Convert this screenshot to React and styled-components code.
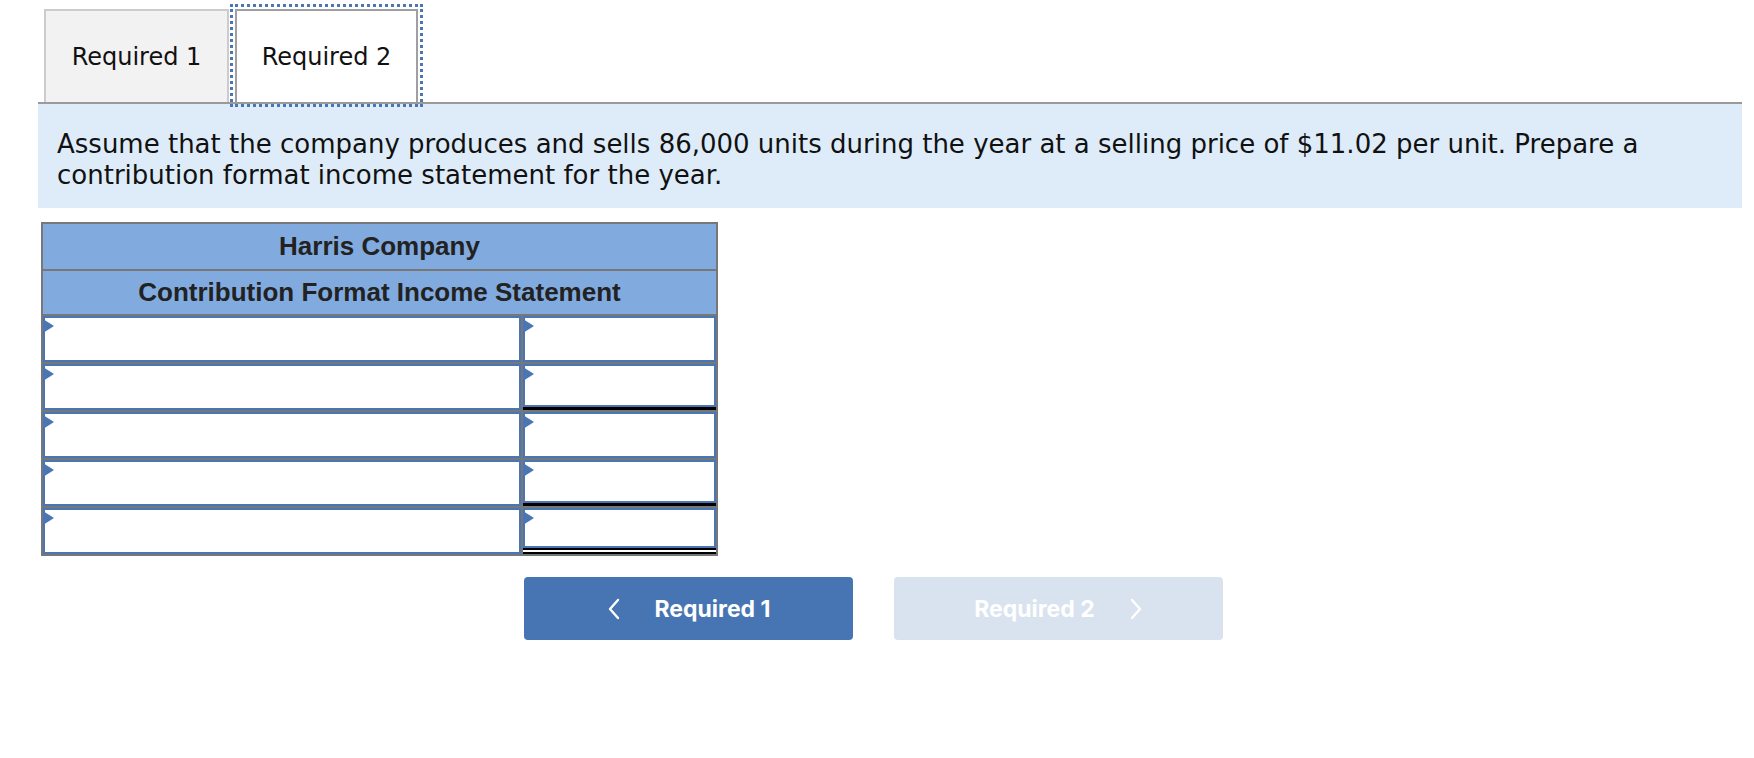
import React from 'react'
import styled, { createGlobalStyle } from 'styled-components'

const GlobalStyle = createGlobalStyle`
    html, body {
        margin: 0;
        padding: 0;
        background: #ffffff;
    }
    body {
        font-family: "DejaVu Sans", Verdana, sans-serif;
        color: #111;
    }
`;

const Page = styled.div`
    width: 1754px;
    padding-top: 9px;
`;

const Content = styled.div`
    padding: 0 12px 0 38px;
`;

const TabBar = styled.div`
    display: flex;
    align-items: flex-end;
    padding-left: 6px;
    border-bottom: 2px solid #9a9a9a;
`;

const Tab = styled.button`
    position: relative;
    z-index: ${props => props.$active ? 2 : 1};
    width: ${props => props.$active ? '183px' : '185px'};
    height: 93px;
    margin-left: ${props => props.$active ? '6px' : '0'};
    border: 2px solid ${props => props.$active ? '#a0a0a0' : '#cccccc'};
    border-bottom: none;
    background: ${props => props.$active ? '#ffffff' : '#f2f2f2'};
    outline: ${props => props.$active ? '3px dotted #4a76b5' : 'none'};
    outline-offset: 2px;
    font-family: "DejaVu Sans", Verdana, sans-serif;
    font-size: 24px;
    color: #111;
    padding: 0;
    cursor: pointer;
`;

const Prompt = styled.div`
    background: #deecf9;
    padding: 25px 19px 17px;
    font-size: 26px;
    line-height: 31px;
    color: #111;
`;

const Statement = styled.div`
    width: 673px;
    margin: 14px 0 0 3px;
    display: grid;
    grid-template-columns: 478px 1fr;
    grid-auto-rows: 46px;
    grid-template-rows: 45px 43px;
    gap: 2px;
    padding: 2px;
    background: #777777;
`;

const HeaderCell = styled.div`
    grid-column: 1 / -1;
    background: #81aadf;
    display: flex;
    align-items: center;
    justify-content: center;
    font-family: "Liberation Sans", Arial, sans-serif;
    font-weight: 700;
    font-size: 26px;
    color: #222;
`;

const DataCell = styled.div`
    display: flex;
    flex-direction: column;
    background: #ffffff;
    border-bottom: ${props =>
        props.$underline === 'double' ? '6px double #000' :
        props.$underline === 'single' ? '3px solid #000' : 'none'};
`;

const Entry = styled.div`
    position: relative;
    flex: 1;
    border: 2px solid #4a76b5;
    background: #ffffff;
`;

const Flag = styled.span`
    position: absolute;
    top: 1px;
    left: -2px;
    width: 0;
    height: 0;
    border-top: 7px solid transparent;
    border-bottom: 7px solid transparent;
    border-left: 11px solid #4a76b5;
`;

const ButtonRow = styled.div`
    display: flex;
    justify-content: center;
    gap: 41px;
    margin-top: 21px;
    padding-right: 7px;
`;

const NavButton = styled.button`
    width: 329px;
    height: 63px;
    border: none;
    border-radius: 4px;
    background: ${props => props.$disabled ? '#d9e3ef' : '#4775b3'};
    color: #ffffff;
    font-family: Inter, "Liberation Sans", sans-serif;
    font-weight: 700;
    font-size: 23px;
    display: flex;
    align-items: center;
    justify-content: center;
    gap: 34px;
    cursor: ${props => props.$disabled ? 'default' : 'pointer'};
`;

const Chevron = ({ dir }) => (
    <svg width="14" height="22" viewBox="0 0 14 22" fill="none">
        <polyline
            points={dir === 'left' ? '11,2 3,11 11,20' : '3,2 11,11 3,20'}
            stroke="#ffffff"
            strokeWidth="2.4"
            strokeLinecap="round"
            strokeLinejoin="round"
        />
    </svg>
)

const rows = [
    { underline: null },
    { underline: 'single' },
    { underline: null },
    { underline: 'single' },
    { underline: 'double' },
]

function App() {
    return (
        <Page>
            <GlobalStyle />
            <Content>
                <TabBar>
                    <Tab>Required 1</Tab>
                    <Tab $active>Required 2</Tab>
                </TabBar>
                <Prompt>
                    Assume that the company produces and sells 86,000 units during the year at a selling price of $11.02 per unit. Prepare a contribution format income statement for the year.
                </Prompt>
                <Statement>
                    <HeaderCell>Harris Company</HeaderCell>
                    <HeaderCell>Contribution Format Income Statement</HeaderCell>
                    {rows.map((row, i) => (
                        <React.Fragment key={i}>
                            <DataCell>
                                <Entry><Flag /></Entry>
                            </DataCell>
                            <DataCell $underline={row.underline}>
                                <Entry><Flag /></Entry>
                            </DataCell>
                        </React.Fragment>
                    ))}
                </Statement>
            </Content>
            <ButtonRow>
                <NavButton>
                    <Chevron dir="left" />
                    <span>Required 1</span>
                </NavButton>
                <NavButton $disabled>
                    <span>Required 2</span>
                    <Chevron dir="right" />
                </NavButton>
            </ButtonRow>
        </Page>
    )
}

export default App
